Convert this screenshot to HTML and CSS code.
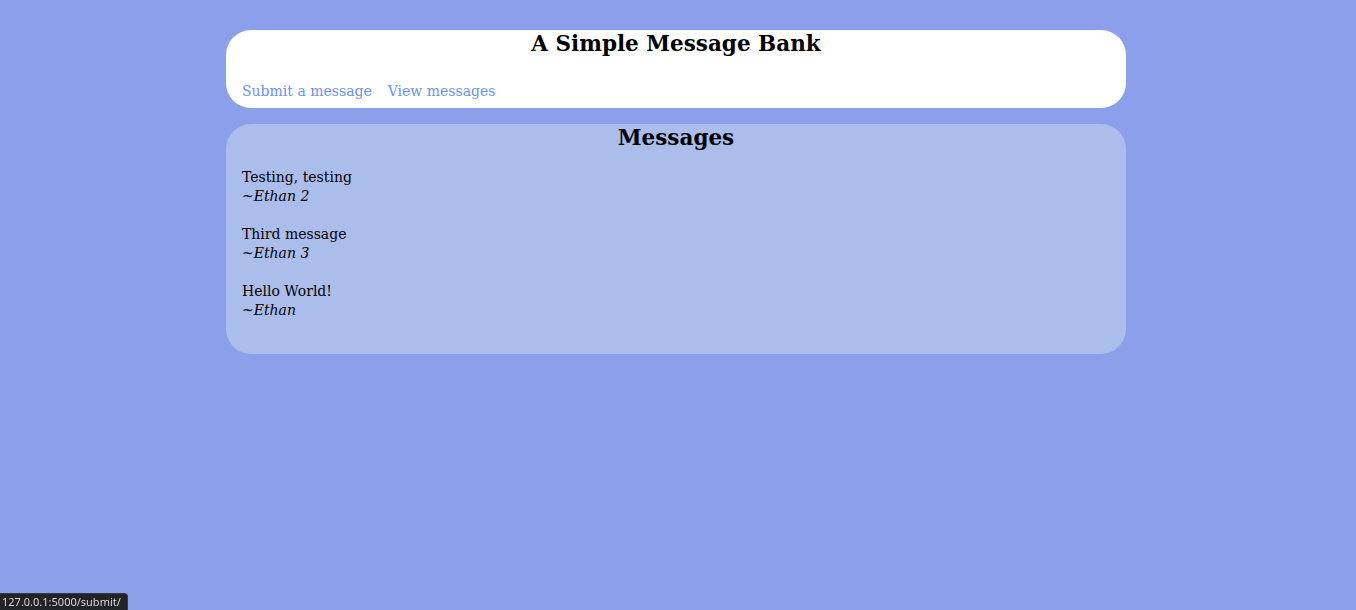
FILE: index.html
```html
<!DOCTYPE html>
<html>
<head>
<meta charset="utf-8">
<title>A Simple Message Bank</title>
<link rel="stylesheet" href="styles.css">
</head>
<body>
<div class="page">
  <header class="card header">
    <h1 class="title">A Simple Message Bank</h1>
    <nav class="nav">
      <a class="nav-link" href="#">Submit a message</a>
      <a class="nav-link" href="#">View messages</a>
    </nav>
  </header>
  <main class="card messages">
    <h2 class="title">Messages</h2>
    <div class="message">
      <div class="message-text">Testing, testing</div>
      <div class="message-author">~Ethan 2</div>
    </div>
    <div class="message">
      <div class="message-text">Third message</div>
      <div class="message-author">~Ethan 3</div>
    </div>
    <div class="message">
      <div class="message-text">Hello World!</div>
      <div class="message-author">~Ethan</div>
    </div>
  </main>
</div>
<div class="status">127.0.0.1:5000/submit/</div>
</body>
</html>
```

FILE: styles.css
```css
html, body {
  margin: 0;
  padding: 0;
}
body {
  background: #8c9fea;
  font-family: "DejaVu Serif", Georgia, serif;
  font-size: 14px;
  color: #000;
  min-height: 610px;
  padding-right: 4px;
  box-sizing: border-box;
}
.page {
  width: 900px;
  margin: 0 auto;
  padding-top: 30px;
  display: flex;
  flex-direction: column;
  gap: 16px;
}
.card {
  border-radius: 25px;
  padding: 0 16px;
}
.header {
  background: #ffffff;
  padding-top: 1px;
  padding-bottom: 7px;
}
.title {
  margin: 0;
  text-align: center;
  font-size: 21.5px;
  line-height: 26px;
  font-weight: bold;
}
.nav {
  margin-top: 25px;
  display: flex;
  gap: 16px;
  line-height: 19px;
}
.nav-link {
  color: #6d92f0;
  text-decoration: none;
}
.messages {
  background: #abbdeb;
  padding-top: 1px;
  padding-bottom: 15px;
}
.message {
  line-height: 19px;
  margin: 19px 0;
}
.message:first-of-type {
  margin-top: 17px;
}
.message-author {
  font-style: italic;
}
.status {
  position: fixed;
  left: 0;
  bottom: 0;
  background: #222326;
  color: #d6d6d6;
  font-family: "Noto Sans", "Liberation Sans", sans-serif;
  font-size: 11px;
  line-height: 16px;
  height: 16px;
  padding: 0 6px 0 2px;
  border-top-right-radius: 4px;
  border: 1px solid #3a3a3a;
  border-left: none;
  border-bottom: none;
}
```
